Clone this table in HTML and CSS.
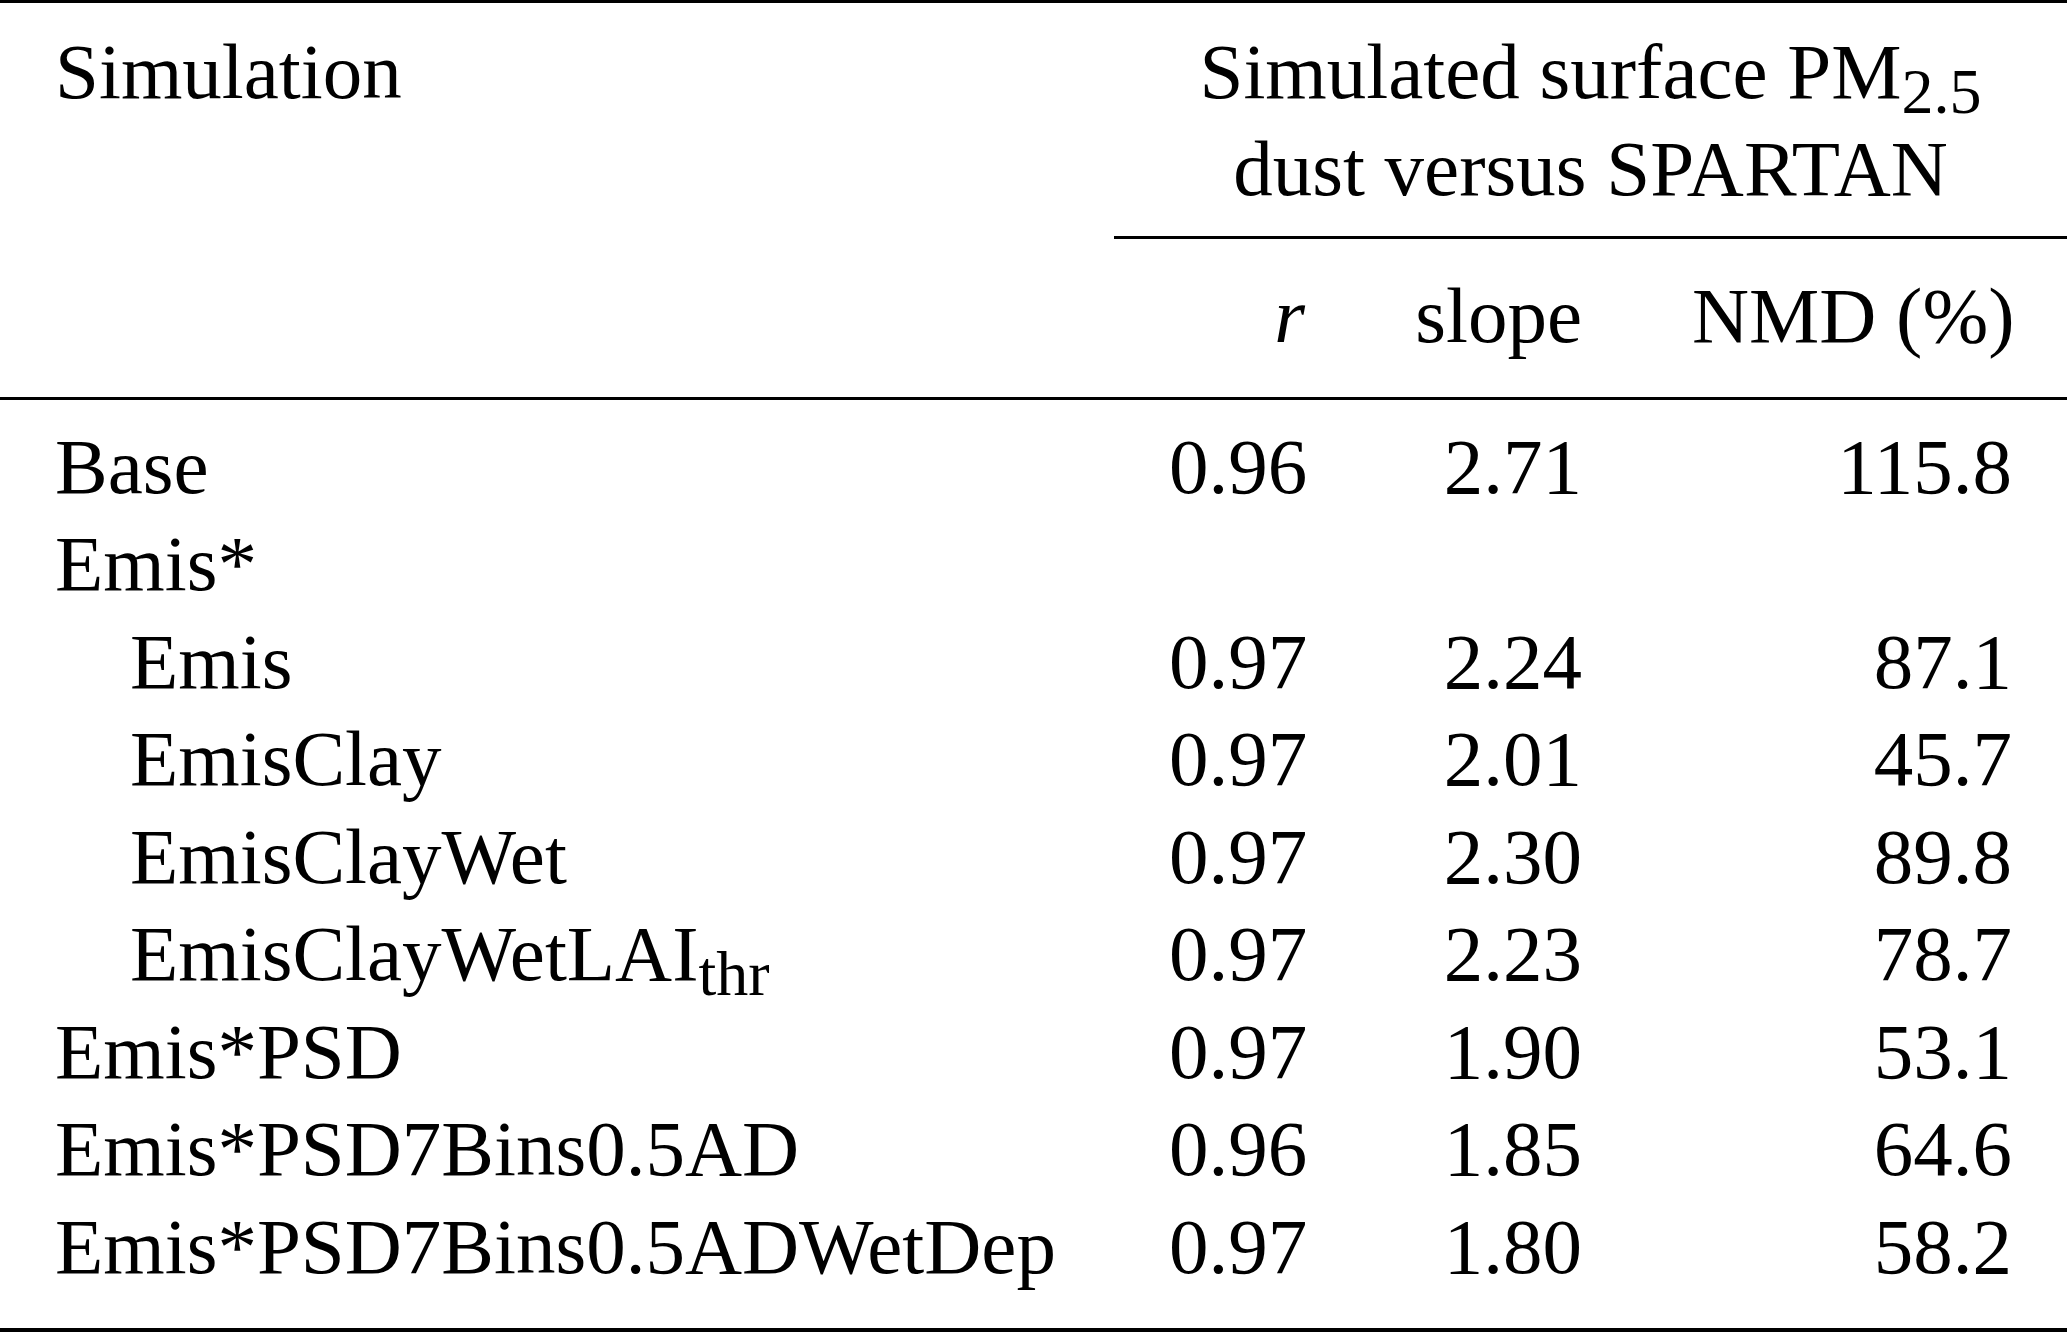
FILE: index.html
```html
<!DOCTYPE html>
<html lang="en">
<head>
<meta charset="utf-8">
<title>Simulated surface PM2.5 dust versus SPARTAN</title>
<link rel="stylesheet" href="styles.css">
</head>
<body>
<table class="results">
  <colgroup>
    <col class="c-sim">
    <col class="c-r">
    <col class="c-slope">
    <col class="c-nmd">
  </colgroup>
  <thead>
    <tr class="head-top">
      <th class="sim">Simulation</th>
      <th colspan="3" class="group">Simulated surface PM<sub>2.5</sub><br>dust versus SPARTAN</th>
    </tr>
    <tr class="head-sub">
      <th></th>
      <th class="num"><i>r</i></th>
      <th class="num">slope</th>
      <th class="num">NMD (%)</th>
    </tr>
  </thead>
  <tbody>
    <tr class="first"><td>Base</td><td class="num">0.96</td><td class="num">2.71</td><td class="num">115.8</td></tr>
    <tr><td>Emis*</td><td class="num"></td><td class="num"></td><td class="num"></td></tr>
    <tr><td class="indent">Emis</td><td class="num">0.97</td><td class="num">2.24</td><td class="num">87.1</td></tr>
    <tr><td class="indent">EmisClay</td><td class="num">0.97</td><td class="num">2.01</td><td class="num">45.7</td></tr>
    <tr><td class="indent">EmisClayWet</td><td class="num">0.97</td><td class="num">2.30</td><td class="num">89.8</td></tr>
    <tr><td class="indent">EmisClayWetLAI<sub>thr</sub></td><td class="num">0.97</td><td class="num">2.23</td><td class="num">78.7</td></tr>
    <tr><td>Emis*PSD</td><td class="num">0.97</td><td class="num">1.90</td><td class="num">53.1</td></tr>
    <tr><td>Emis*PSD7Bins0.5AD</td><td class="num">0.96</td><td class="num">1.85</td><td class="num">64.6</td></tr>
    <tr class="last"><td>Emis*PSD7Bins0.5ADWetDep</td><td class="num">0.97</td><td class="num">1.80</td><td class="num">58.2</td></tr>
  </tbody>
</table>
</body>
</html>
```

FILE: styles.css
```css
html, body {
  margin: 0;
  padding: 0;
  background: #ffffff;
}

body {
  font-family: "Liberation Serif", "Times New Roman", serif;
  font-size: 79px;
  color: #000000;
}

.results {
  width: 2067px;
  border-collapse: separate;
  border-spacing: 0;
  table-layout: fixed;
}

.c-sim { width: 1114px; }
.c-r { width: 246px; }
.c-slope { width: 277px; }
.c-nmd { width: 430px; }

.results th,
.results td {
  padding: 0 55px;
  font-weight: normal;
  line-height: 97px;
  text-align: left;
  vertical-align: top;
  white-space: nowrap;
}

.results .num {
  text-align: right;
}

.results .group {
  text-align: center;
}

.head-top th {
  border-top: 3px solid #000000;
  padding-top: 19.8px;
  padding-bottom: 19.2px;
}

.head-top .group {
  border-bottom: 3px solid #000000;
}

.head-sub th {
  padding-top: 27.8px;
  padding-bottom: 33.2px;
  border-bottom: 3px solid #000000;
}

.results tbody td {
  line-height: 97.5px;
}

.results tbody tr.first td {
  padding-top: 17.6px;
}

.results tbody tr.last td {
  padding-bottom: 32.9px;
  border-bottom: 4px solid #000000;
}

.results td.indent {
  padding-left: 130px;
}

.results sub {
  font-size: 64px;
  line-height: 0;
  vertical-align: -15px;
}
```
